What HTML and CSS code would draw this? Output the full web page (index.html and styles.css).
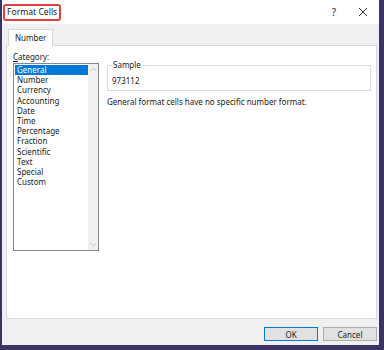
FILE: index.html
```html
<!DOCTYPE html>
<html lang="en">
<head>
  <meta charset="UTF-8">
  <title>Format Cells</title>
  <link rel="stylesheet" href="styles.css">
</head>
<body>
  <div class="dialog">
    <!-- Title bar -->
    <div class="titlebar">
      <span class="title">Format Cells</span>
      <span class="help">?</span>
      <span class="close">
        <svg width="10" height="10" viewBox="0 0 10 10"><path d="M1 1 L9 9 M9 1 L1 9" stroke="#333" stroke-width="1"/></svg>
      </span>
    </div>

    <!-- Tabs -->
    <div class="tabs">
      <div class="tab active">Number</div>
    </div>

    <div class="panel">
      <div class="left-col">
        <div class="label"><u>C</u>ategory:</div>
        <div class="listbox">
          <ul class="items">
            <li class="selected">General</li>
            <li>Number</li>
            <li>Currency</li>
            <li>Accounting</li>
            <li>Date</li>
            <li>Time</li>
            <li>Percentage</li>
            <li>Fraction</li>
            <li>Scientific</li>
            <li>Text</li>
            <li>Special</li>
            <li>Custom</li>
          </ul>
          <div class="scrollbar">
            <svg width="7" height="5" viewBox="0 0 7 5"><path d="M0.5 4 L3.5 1 L6.5 4" fill="none" stroke="#c2c2c2" stroke-width="1"/></svg>
            <svg width="7" height="5" viewBox="0 0 7 5"><path d="M0.5 1 L3.5 4 L6.5 1" fill="none" stroke="#c2c2c2" stroke-width="1"/></svg>
          </div>
        </div>
      </div>

      <div class="right-col">
        <fieldset class="sample">
          <legend>Sample</legend>
          <div class="sample-value">973112</div>
        </fieldset>
        <p class="desc">General format cells have no specific number format.</p>
      </div>
    </div>

    <!-- Buttons -->
    <div class="buttons">
      <button class="btn default">OK</button>
      <button class="btn">Cancel</button>
    </div>
  </div>
</body>
</html>
```

FILE: styles.css
```css
/* General Styling */
body {
  margin: 0;
  padding: 0;
  width: 384px;
  height: 350px;
  overflow: hidden;
  background: #3b3362;
  font-family: 'Noto Sans', sans-serif;
  font-size: 8px;
  color: #1a1a1a;
}

.dialog {
  width: 377px;
  height: 345px;
  margin-left: 2px;
  background: #f0f0f0;
  display: flex;
  flex-direction: column;
}

/* Title bar */
.titlebar {
  height: 24px;
  background: #fff;
  display: flex;
  align-items: center;
}

.title {
  margin-left: 1px;
  margin-top: 1px;
  padding: 1px 2px 1px 2px;
  border: 2px solid #e0403f;
  border-radius: 3px;
  font-size: 8.6px;
  line-height: 11px;
}

.help {
  margin-left: auto;
  margin-right: 22px;
  font-size: 10px;
  color: #333;
}

.close {
  margin-right: 11px;
  display: flex;
}

/* Tabs */
.tabs {
  display: flex;
  padding: 5px 0 0 6px;
}

.tab {
  padding: 3px 6px 3px 6px;
  line-height: 10px;
  background: #fff;
  border: 1px solid #d9d9d9;
  border-bottom: none;
  margin-bottom: -1px;
  position: relative;
}

/* Panel */
.panel {
  margin: 0 2px 0 4px;
  height: 274px;
  background: #fff;
  border: 1px solid #d9d9d9;
  display: flex;
  gap: 8px;
  padding: 6px 0 0 6px;
  box-sizing: border-box;
}

.label {
  line-height: 10px;
  margin-bottom: 1px;
}

.listbox {
  width: 86px;
  height: 188px;
  border: 1px solid #828790;
  box-sizing: border-box;
  display: flex;
}

.items {
  list-style: none;
  margin: 0;
  padding: 1px 0 0 1px;
  flex: 1;
}

.items li {
  height: 10.2px;
  line-height: 10px;
  padding-left: 2px;
}

.items li.selected {
  background: #0078d7;
  color: #fff;
}

.scrollbar {
  width: 10px;
  background: #f0f0f0;
  display: flex;
  flex-direction: column;
  justify-content: space-between;
  align-items: center;
  padding: 3px 0 3px;
}

.right-col {
  flex: 1;
  margin-right: 5px;
}

.sample {
  margin: 9px 0 0;
  padding: 7px 4px 3px;
  border: 1px solid #dcdcdc;
  height: 30px;
  box-sizing: border-box;
}

.sample legend {
  padding: 0 1px;
  line-height: 8px;
}

.sample-value {
  line-height: 10px;
}

.desc {
  margin: 6px 0 0;
  line-height: 10px;
}

/* Buttons */
.buttons {
  display: flex;
  justify-content: flex-end;
  gap: 5px;
  padding: 8px 2px 0 0;
}

.btn {
  width: 54px;
  height: 14px;
  padding: 0;
  font-family: 'Noto Sans', sans-serif;
  font-size: 8px;
  color: #1a1a1a;
  background: #e1e1e1;
  border: 1px solid #adadad;
}

.btn.default {
  border-color: #0078d7;
}
```
